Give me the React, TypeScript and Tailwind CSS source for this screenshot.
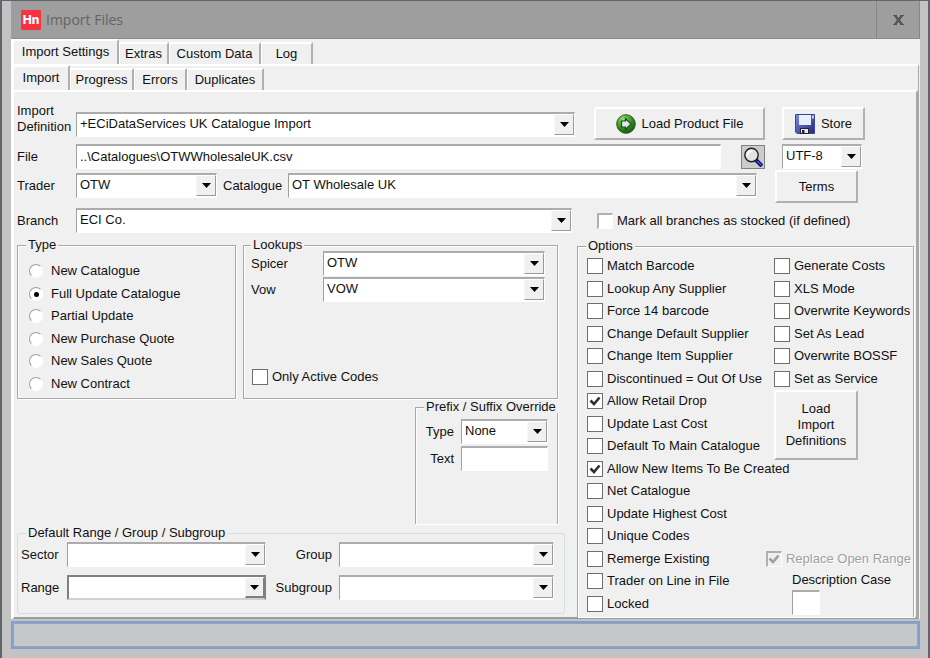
import { useId } from "react"
import type { ReactNode } from "react"
import clsx from "clsx"

const leftOptions = [
  { label: "Match Barcode" },
  { label: "Lookup Any Supplier" },
  { label: "Force 14 barcode" },
  { label: "Change Default Supplier" },
  { label: "Change Item Supplier" },
  { label: "Discontinued = Out Of Use" },
  { label: "Allow Retail Drop", checked: true },
  { label: "Update Last Cost" },
  { label: "Default To Main Catalogue" },
  { label: "Allow New Items To Be Created", checked: true },
  { label: "Net Catalogue" },
  { label: "Update Highest Cost" },
  { label: "Unique Codes" },
  { label: "Remerge Existing" },
  { label: "Trader on Line in File" },
  { label: "Locked" },
]

const rightOptions = [
  "Generate Costs",
  "XLS Mode",
  "Overwrite Keywords",
  "Set As Lead",
  "Overwrite BOSSF",
  "Set as Service",
]

const importTypes = [
  "New Catalogue",
  "Full Update Catalogue",
  "Partial Update",
  "New Purchase Quote",
  "New Sales Quote",
  "New Contract",
]

const sunken = "border-t-2 border-l border-r border-b border-t-[#acacac] border-l-[#a0a0a0] border-r-white border-b-white bg-white"

function Tab({ label, active, className }: { label: string; active?: boolean; className: string }) {
  return (
    <button
      type="button"
      role="tab"
      aria-selected={!!active}
      className={clsx(
        "border-t-2 border-l border-t-white border-l-white border-r-2 border-r-[#b0b0b0] bg-[#f0f0f0] text-center",
        active ? "h-[25px] pb-0.5" : "h-[22px]",
        className
      )}
    >
      {label}
    </button>
  )
}

interface ComboProps {
  value?: string
  className?: string
  id?: string
  label?: string
  focused?: boolean
}

function Combo({ value = "", className, id, label, focused }: ComboProps) {
  return (
    <div className={clsx("relative h-[25px]", className)}>
      <select
        id={id}
        aria-label={label}
        defaultValue={value}
        className={clsx(
          "block h-full w-full appearance-none rounded-none pb-0.5 pl-[3px] outline-none",
          focused ? "border-2 border-[#808080] border-b-[#d0d0d0] bg-white" : sunken
        )}
      >
        <option value={value}>{value}</option>
      </select>
      <span
        className={clsx(
          "pointer-events-none absolute top-[2px] right-[1px] bottom-[2px] flex w-5 items-center justify-center border-t border-l border-t-white border-l-[#f8f8f8] bg-[#f0f0f0]",
          focused ? "border-r-2 border-b-2 border-r-[#808080] border-b-[#808080]" : "border-r border-b border-r-[#9a9a9a] border-b-[#9a9a9a]"
        )}
      >
        <svg className="h-[5px] w-[9px]" viewBox="0 0 9 5">
          <path d="M0 0h9L4.5 5z" fill="#000" />
        </svg>
      </span>
    </div>
  )
}

interface CheckProps {
  label: string
  checked?: boolean
  disabled?: boolean
  soft?: boolean
  className?: string
}

function Check({ label, checked, disabled, soft, className }: CheckProps) {
  return (
    <label className={clsx("flex items-center gap-1 whitespace-nowrap", disabled && "text-[#a0a0a0] [text-shadow:1px_1px_0_#fff]", className)}>
      <span className="relative size-4 shrink-0">
        <input
          type="checkbox"
          defaultChecked={checked}
          disabled={disabled}
          className={clsx(
            "peer block size-4 appearance-none",
            soft || disabled
              ? "border-t-2 border-l-2 border-r border-b border-t-[#b0b0b0] border-l-[#b0b0b0] border-r-white border-b-white"
              : "border border-[#6e6e6e]",
            disabled ? "bg-[#f0f0f0]" : "bg-white"
          )}
        />
        <svg className="pointer-events-none absolute inset-0 hidden size-4 peer-checked:block" viewBox="0 0 16 16" fill="none">
          <path d="M3.5 7.5L7 11l5.500-6.500" stroke={disabled ? "#a0a0a0" : "#303030"} strokeWidth="2.600" />
        </svg>
      </span>
      {label}
    </label>
  )
}

interface GroupProps {
  title: string
  className?: string
  legendClassName?: string
  children: ReactNode
}

function Group({ title, className, legendClassName = "ml-2", children }: GroupProps) {
  return (
    <fieldset className={clsx("min-w-0 border-[#a8a8a8] shadow-[1px_1px_0_#fff,inset_1px_1px_0_#fff]", className)}>
      <legend className={clsx("bg-[#f0f0f0] px-0.5 leading-[12px] whitespace-nowrap", legendClassName)}>{title}</legend>
      {children}
    </fieldset>
  )
}

function PushButton({ className, children }: { className?: string; children: ReactNode }) {
  return (
    <button
      type="button"
      className={clsx(
        "flex items-center justify-center border-t-2 border-l-2 border-r-2 border-b-2 border-t-white border-l-white border-r-[#b0b0b0] border-b-[#b0b0b0] bg-[#f0f0f0] leading-[16px]",
        className
      )}
    >
      {children}
    </button>
  )
}

function LoadIcon() {
  return (
    <svg className="size-5" viewBox="0 0 20 20">
      <defs>
        <radialGradient id="green" cx="0.35" cy="0.25" r="0.8">
          <stop offset="0" stopColor="#9bdc72" />
          <stop offset="0.5" stopColor="#3f9a26" />
          <stop offset="1" stopColor="#12560c" />
        </radialGradient>
      </defs>
      <circle cx="10" cy="10" r="9.300" fill="url(#green)" stroke="#2b5a22" />
      <path d="M5.500 7h4V4.500L15 10l-5.500 5.500V13h-4z" fill="#dfe7ee" stroke="#234a1c" strokeWidth="1.200" />
    </svg>
  )
}

function StoreIcon() {
  return (
    <svg className="size-5" viewBox="0 0 20 20">
      <defs>
        <linearGradient id="disk" x1="0" y1="0" x2="1" y2="1">
          <stop offset="0" stopColor="#7c8ee0" />
          <stop offset="1" stopColor="#22287a" />
        </linearGradient>
      </defs>
      <path d="M.5.500h19v19H2l-1.500-1.500z" fill="url(#disk)" stroke="#3c459c" />
      <path d="M4 1h12v10H4z" fill="#e9eefb" />
      <path d="M17 1.500h2v3h-2z" fill="#c9d2f4" />
      <path d="M5 14h9v6H5z" fill="#1d2240" />
      <path d="M6 15h7v4H6z" fill="#e6e8ee" />
      <path d="M7 16h2.500v3H7z" fill="#1d2240" />
    </svg>
  )
}

function SearchIcon() {
  return (
    <svg className="size-5" viewBox="0 0 20 20">
      <path d="M13 13l6 6" stroke="#10108c" strokeWidth="4" />
      <path d="M14 13.800l4.500 4.500" stroke="#8c8ce0" strokeWidth="1" />
      <circle cx="8.500" cy="8" r="6.700" fill="#e4e4e4" stroke="#222" strokeWidth="1.400" />
      <path d="M4.500 8.500a4 4 0 0 1 4-4.500" stroke="#fff" strokeWidth="2" fill="none" />
    </svg>
  )
}

export default function App() {
  const id = useId()

  return (
    <div className="flex min-h-screen flex-col border-t border-r-2 border-l-2 border-[#63656c] bg-[#c3c3c3] pr-2 pl-[9px] font-['Liberation_Sans',Arial,sans-serif] text-[13px] leading-[16px] text-[#111]">
      <header className="flex h-[38px] items-stretch border-b border-[#8e8c93] bg-[#9e9e9e]">
        <div className="flex flex-1 items-center pl-2.5">
          <span className="flex size-5 items-center justify-center rounded-[1px] bg-[#f8323f] font-['Inter',sans-serif] text-[12px] font-extrabold text-white">
            Hn
          </span>
          <h1 className="pl-[5px] font-['Open_Sans','Noto_Sans',sans-serif] text-[14px] text-[#646464]">Import Files</h1>
        </div>
        <button type="button" aria-label="Close" className="flex w-11 items-center justify-center border-r border-l border-[#85858a]">
          <svg className="h-2.5 w-[11px]" viewBox="0 0 11 10">
            <path d="M2 .5L9 9.500M9 .5L2 9.500" stroke="#555" strokeWidth="2.400" />
            <path d="M0 .5h4M7 .5h4M0 9.500h4M7 9.500h4" stroke="#555" />
          </svg>
        </button>
      </header>

      <main className="border-l-2 border-white bg-[#f0f0f0]">
        <div role="tablist" className="flex h-[25px] items-end">
          <Tab label="Import Settings" active className="w-[106px]" />
          <Tab label="Extras" className="w-[50px]" />
          <Tab label="Custom Data" className="w-[92px]" />
          <Tab label="Log" className="w-[52px]" />
        </div>
        <div className="mr-px border-t-2 border-r border-t-white border-r-[#a8a8a8]">
          <div role="tablist" className="flex h-6 items-end">
            <Tab label="Import" active className="w-[57px]" />
            <Tab label="Progress" className="w-[64px]" />
            <Tab label="Errors" className="w-[53px]" />
            <Tab label="Duplicates" className="w-[77px]" />
          </div>

          <div className="border-t-2 border-r-2 border-b-2 border-l border-t-white border-r-[#a8a8a8] border-b-[#9c9c9c] border-l-white pt-[15px] pl-[3px]">
            <div className="flex h-[33px] items-start">
              <label htmlFor={`${id}-def`} className="-mt-1 w-[59px] shrink-0">
                Import Definition
              </label>
              <Combo id={`${id}-def`} value="+ECiDataServices UK Catalogue Import" className="mt-[5px] min-w-0 flex-1" />
              <PushButton className="ml-[19px] h-[33px] w-[171px] gap-1.5">
                <LoadIcon />
                Load Product File
              </PushButton>
              <PushButton className="mr-[51px] ml-[17px] h-[33px] w-[83px] gap-1.5">
                <StoreIcon />
                Store
              </PushButton>
            </div>

            <div className="mt-1 flex h-[25px] items-center">
              <label htmlFor={`${id}-file`} className="w-[59px] shrink-0">
                File
              </label>
              <input
                id={`${id}-file`}
                defaultValue={"..\\Catalogues\\OTWWholesaleUK.csv"}
                className={clsx("h-[25px] min-w-0 flex-1 pb-0.5 pl-[3px] outline-none", sunken)}
              />
              <button type="button" aria-label="Browse" className="ml-5 flex size-6 items-center justify-center border border-[#808080] bg-[#cccccc]">
                <SearchIcon />
              </button>
              <Combo label="Encoding" value="UTF-8" className="mr-[54px] ml-[17px] w-20" />
            </div>

            <div className="mt-px flex h-[33px] items-center">
              <label htmlFor={`${id}-trader`} className="mb-0.5 w-[59px] shrink-0">
                Trader
              </label>
              <Combo id={`${id}-trader`} value="OTW" className="mb-0.5 w-[141px]" />
              <label htmlFor={`${id}-cat`} className="mb-0.5 w-[71px] pl-[6px]">
                Catalogue
              </label>
              <Combo id={`${id}-cat`} value="OT Wholesale UK" className="mb-0.5 min-w-0 flex-1" />
              <PushButton className="mr-[58px] ml-[18px] h-[33px] w-[83px]">Terms</PushButton>
            </div>

            <div className="mt-[5px] flex h-[25px] items-center">
              <label htmlFor={`${id}-branch`} className="w-[59px] shrink-0">
                Branch
              </label>
              <Combo id={`${id}-branch`} value="ECI Co." className="min-w-0 flex-1" />
              <Check label="Mark all branches as stocked (if defined)" soft className="ml-[25px] w-[319px]" />
            </div>

            <div className="flex items-stretch">
              <div className="flex min-w-0 flex-1 flex-col pt-[6px] pb-[3px]">
                <div className="mr-[7px] flex gap-[7px]">
                  <Group title="Type" className="w-[219px] border pb-[3px]">
                    <div className="pt-[9px] pl-[11px]">
                      {importTypes.map((type) => (
                        <label key={type} className="flex items-center gap-2 odd:h-[22px] even:h-[23px]">
                          <span className="relative size-3.5">
                            <input
                              type="radio"
                              name="import-type"
                              defaultChecked={type === "Full Update Catalogue"}
                              className="peer block size-3.5 appearance-none rounded-full border border-t-[#a0a0a0] border-r-white border-b-white border-l-[#a0a0a0] bg-white"
                            />
                            <span className="pointer-events-none absolute top-[5px] left-[5px] hidden size-[5px] rounded-full bg-black peer-checked:block" />
                          </span>
                          {type}
                        </label>
                      ))}
                    </div>
                  </Group>
                  <Group title="Lookups" className="flex flex-1 flex-col border pr-3 pl-[7px]" legendClassName="ml-0">
                    <div className="flex items-center">
                      <label htmlFor={`${id}-spicer`} className="w-[72px]">
                        Spicer
                      </label>
                      <Combo id={`${id}-spicer`} value="OTW" className="flex-1" />
                    </div>
                    <div className="mt-px flex items-center">
                      <label htmlFor={`${id}-vow`} className="w-[72px]">
                        Vow
                      </label>
                      <Combo id={`${id}-vow`} value="VOW" className="flex-1" />
                    </div>
                    <Check label="Only Active Codes" className="mt-[67px] ml-px" />
                  </Group>
                </div>

                <Group title="Prefix / Suffix Override" className="mt-0.5 mr-[7px] h-[123px] w-[143px] self-end border-t border-r border-l pr-[9px]">
                  <div className="mt-1.5 flex items-center">
                    <label htmlFor={`${id}-ptype`} className="w-[45px] pr-[7px] text-right">
                      Type
                    </label>
                    <Combo id={`${id}-ptype`} value="None" className="flex-1" />
                  </div>
                  <div className="mt-0.5 flex items-center">
                    <label htmlFor={`${id}-ptext`} className="w-[45px] pr-[7px] text-right">
                      Text
                    </label>
                    <input id={`${id}-ptext`} className={clsx("h-[25px] min-w-0 flex-1 pl-[3px] outline-none", sunken)} />
                  </div>
                </Group>

                <fieldset className="mt-[3px] min-w-0 rounded-[3px] border border-[#d3dfe6] pr-[10px] pb-[13px] pl-[3px]">
                  <legend className="ml-[5px] px-0.5 leading-[12px]">Default Range / Group / Subgroup</legend>
                  <div className="grid grid-cols-[46px_199px_73px_1fr] gap-y-2 pt-[3px]">
                    <label htmlFor={`${id}-sector`} className="self-center">
                      Sector
                    </label>
                    <Combo id={`${id}-sector`} />
                    <label htmlFor={`${id}-group`} className="self-center pr-[7px] text-right">
                      Group
                    </label>
                    <Combo id={`${id}-group`} />
                    <label htmlFor={`${id}-range`} className="self-center">
                      Range
                    </label>
                    <Combo id={`${id}-range`} focused />
                    <label htmlFor={`${id}-subgroup`} className="self-center pr-[7px] text-right">
                      Subgroup
                    </label>
                    <Combo id={`${id}-subgroup`} />
                  </div>
                </fieldset>
              </div>

              <Group title="Options" className="mt-[7px] mr-[2px] ml-3 w-[337px] border-t border-r border-l">
                <div className="flex pt-[3px] pl-[9px]">
                  <div className="w-[187px] shrink-0">
                    {leftOptions.map((option) => (
                      <Check key={option.label} {...option} className="odd:h-[22px] even:h-[23px]" />
                    ))}
                  </div>
                  <div className="flex min-w-0 flex-1 flex-col">
                    {rightOptions.map((label) => (
                      <Check key={label} label={label} className="odd:h-[22px] even:h-[23px]" />
                    ))}
                    <PushButton className="h-[70px] w-[84px]">
                      Load
                      <br />
                      Import
                      <br />
                      Definitions
                    </PushButton>
                    <Check label="Replace Open Range" checked disabled className="mt-[87px] mr-0.5 h-[23px] self-end" />
                    <label htmlFor={`${id}-case`} className="mt-0.5 pl-[18px] whitespace-nowrap">
                      Description Case
                    </label>
                    <input id={`${id}-case`} className={clsx("mt-0.5 ml-[18px] h-[25px] w-7 outline-none", sunken)} />
                  </div>
                </div>
              </Group>
            </div>
          </div>
        </div>
      </main>

      <div className="mt-0.5 mb-2.5 border-2 border-[#7f9fd6] bg-[#c6c7c9]">
        <div role="status" className="h-6 border border-[#a2a2a2]" />
      </div>
    </div>
  )
}
